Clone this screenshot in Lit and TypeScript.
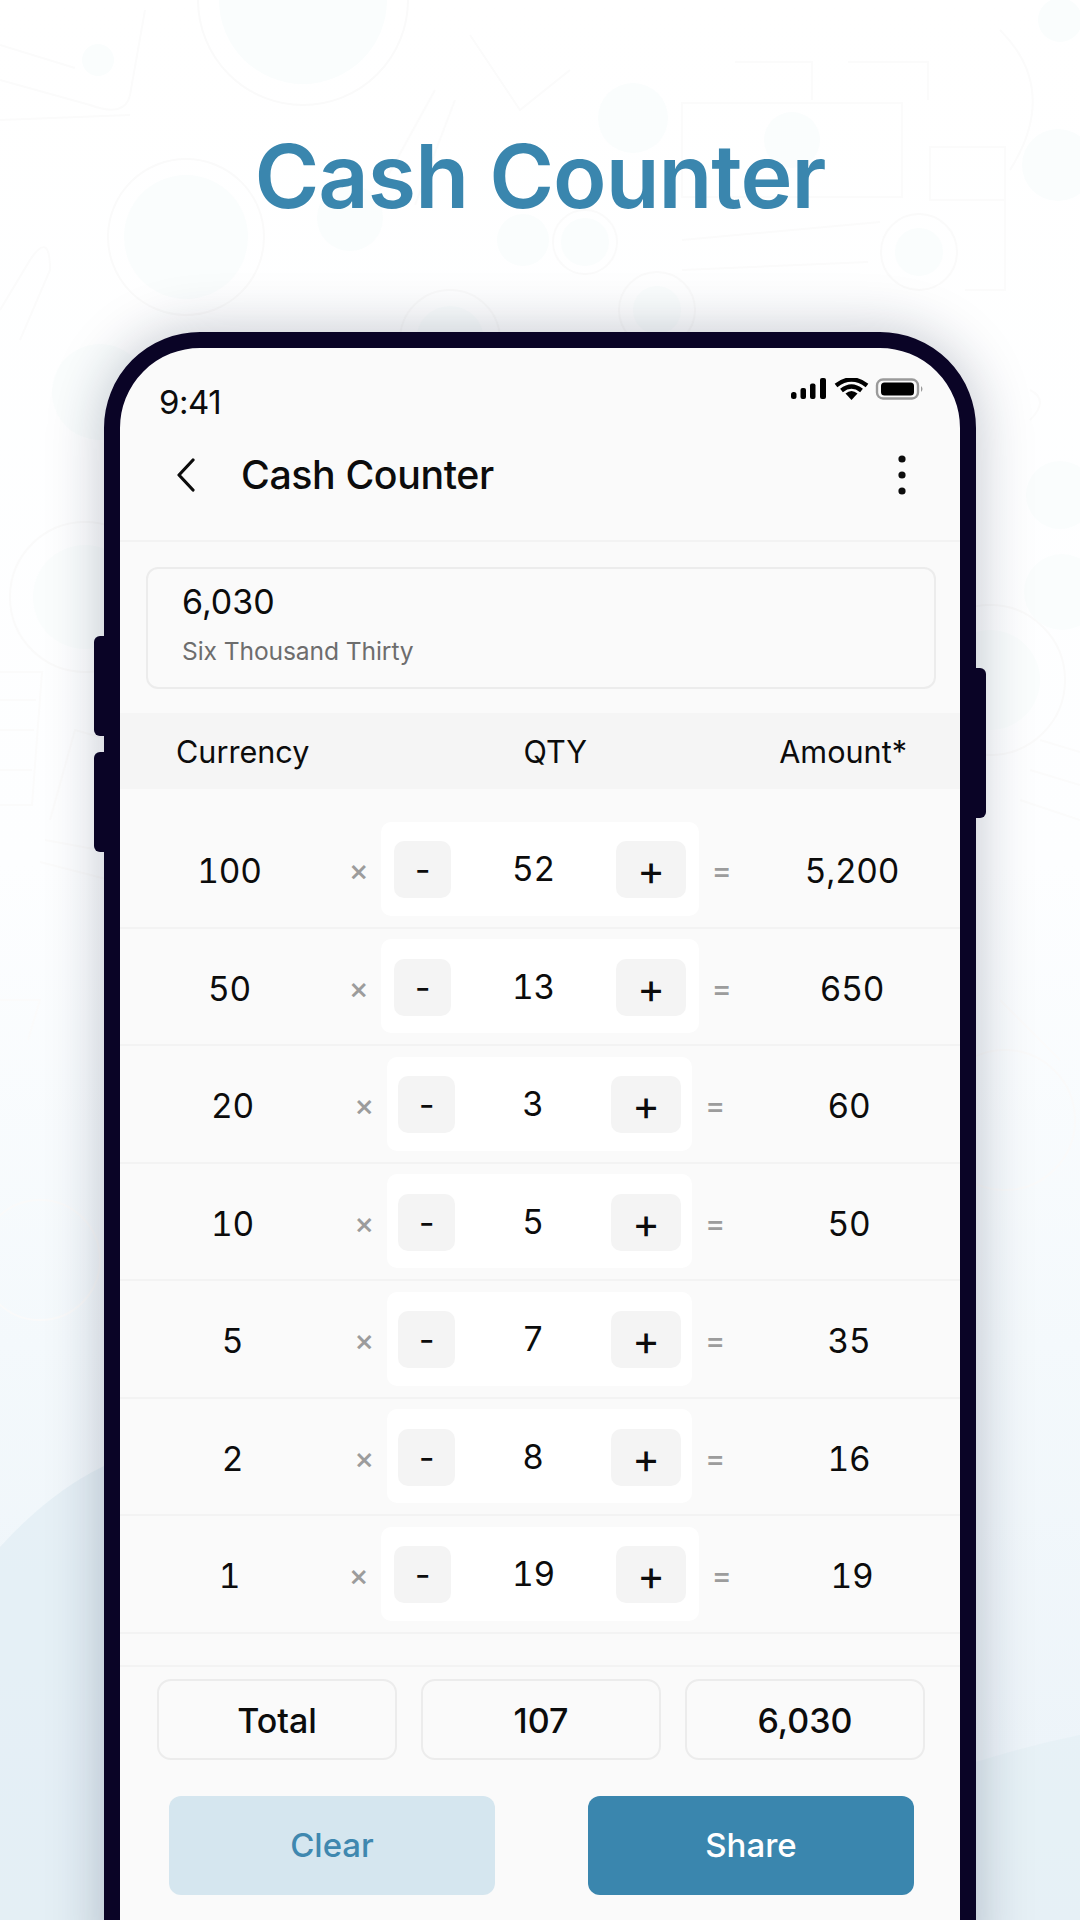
import { LitElement, html, css, svg } from "lit";
import { customElement } from "lit/decorators.js";

const ROWS = [
  { cur: "100", qty: "52", amt: "5,200", wide: true },
  { cur: "50", qty: "13", amt: "650", wide: true },
  { cur: "20", qty: "3", amt: "60", wide: false },
  { cur: "10", qty: "5", amt: "50", wide: false },
  { cur: "5", qty: "7", amt: "35", wide: false },
  { cur: "2", qty: "8", amt: "16", wide: false },
  { cur: "1", qty: "19", amt: "19", wide: true },
];

const COINS: [number, number, number, number][] = [
  [303, 0, 105, 84], [186, 237, 78, 62], [585, 242, 32, 24], [919, 252, 38, 24], [657, 310, 38, 24],
  [85, 597, 75, 52], [990, 680, 75, 50], [450, 340, 50, 34], [1005, 1120, 70, 0], [40, 1260, 60, 0],
];
const BLOBS: [number, number, number][] = [
  [633, 118, 35], [792, 140, 28], [350, 218, 33], [523, 240, 26], [1058, 165, 36], [100, 392, 48],
  [1060, 495, 34], [1062, 592, 38], [1060, 20, 22], [98, 60, 16],
];
const LINES: string[] = [
  "M0 45 L75 68", "M0 80 L90 105 Q125 118 130 95 L145 10", "M0 120 L130 115",
  "M682 240 L880 222", "M682 270 L868 262", "M930 147 H1005 V200 H930 Z", "M930 200 H1005 V290 H965",
  "M735 62 H812 V100", "M848 62 H928 V100", "M682 103 H902 V197 H682 Z",
  "M470 35 L520 110 L570 70", "M380 190 L435 90", "M415 205 L455 100",
  "M0 672 H42 L32 805 H0", "M0 700 H36", "M0 730 H34", "M0 770 H32",
  "M50 820 L75 730 L110 740", "M45 840 L110 852", "M40 862 L110 880",
  "M1040 740 L1080 752", "M1030 770 L1080 785", "M1020 800 L1080 820",
  "M0 310 L30 260 Q50 230 50 270 L20 340", "M0 1000 L40 1000 L28 1040", "M1000 1000 L1060 1060",
  "M1030 390 Q1050 400 1030 420", "M1000 30 Q1060 90 1010 170",
];

@customElement("app-root")
export class AppRoot extends LitElement {
  static styles = css`
    :host {
      display: block;
      width: 1080px;
      height: 1920px;
      overflow: hidden;
      position: relative;
      font-family: "Inter", "Liberation Sans", sans-serif;
      color: #0c0c0c;
      background: linear-gradient(180deg, #ffffff 0%, #fdfeff 45%, #f4f9fc 70%, #eaf2f8 100%);
    }
    .decor { position: absolute; inset: 0; width: 1080px; height: 1920px; }
    .title {
      position: relative;
      margin: 0;
      height: 332px;
      padding-top: 128px;
      box-sizing: border-box;
      text-align: center;
      font-size: 88px;
      line-height: 96px;
      font-weight: 600;
      letter-spacing: -1px;
      color: #3a86ae;
    }
    .phone {
      position: relative;
      margin-left: 104px;
      width: 872px;
      height: 1640px;
      box-sizing: border-box;
      border: 16px solid #0a0426;
      border-radius: 96px 96px 0 0;
      background: #fafafa;
      box-shadow: 0 0 56px rgba(20, 30, 60, 0.26);
    }
    .side {
      position: absolute;
      width: 12px;
      background: #0a0426;
      border-radius: 6px 0 0 6px;
    }
    .s1 { left: -26px; top: 288px; height: 100px; }
    .s2 { left: -26px; top: 404px; height: 100px; }
    .s3 { right: -26px; top: 320px; height: 150px; border-radius: 0 6px 6px 0; }
    .screen {
      border-radius: 80px 80px 0 0;
      overflow: hidden;
      display: flex;
      flex-direction: column;
      height: 100%;
    }
    .status {
      height: 84px;
      padding: 30px 35px 0 39px;
      box-sizing: border-box;
      display: flex;
      justify-content: space-between;
      align-items: flex-start;
    }
    .time { font-size: 33px; line-height: 48px; font-weight: 400; letter-spacing: -0.5px; }
    .sicons { display: block; }
    .appbar {
      height: 110px;
      padding: 0 53px 22px 56px;
      box-sizing: border-box;
      display: flex;
      align-items: center;
      border-bottom: 2px solid #f3f3f3;
    }
    .apptitle { font-size: 39.3px; font-weight: 500; margin-left: 45px; flex: 1; letter-spacing: -0.4px; line-height: 44px; }
    .card {
      margin: 25px 24px 0 26px;
      height: 122px;
      box-sizing: border-box;
      padding: 13px 34px;
      border: 2px solid #ececec;
      border-radius: 12px;
    }
    .big { font-size: 34px; line-height: 40px; }
    .small { font-size: 24.6px; line-height: 32px; margin-top: 13px; color: #6d6d6d; letter-spacing: -0.1px; }
    .thead {
      margin-top: 24px;
      height: 76px;
      background: #f5f5f5;
      font-size: 30.6px;
      display: grid;
      grid-template-columns: 347.5px 172px 1fr;
      align-items: center;
      box-sizing: border-box;
      padding-left: 56px;
      padding-right: 53px;
    }
    .thead .r { text-align: right; }
    .rows { padding-top: 22px; }
    .row {
      height: 117.5px;
      box-sizing: border-box;
      border-bottom: 2px solid #f3f3f3;
      display: grid;
      align-items: center;
      font-size: 33.5px;
      font-variant-numeric: tabular-nums;
      letter-spacing: -0.3px;
      text-align: center;
    }
    .row.wide { grid-template-columns: 216px 45px 318px 45px 216px; }
    .row.narrow { grid-template-columns: 221px 46px 305px 46px 222px; }
    .cur, .amt { margin-top: 5px; }
    .op { margin-top: 3px; }
    .row.wide .cur { padding-left: 3px; }
    .row.narrow .cur { padding-left: 4px; }
    .op { color: #9c9c9c; font-size: 30px; font-weight: 500; }
    .stepper {
      height: 94px;
      background: #fff;
      border-radius: 10px;
      display: flex;
      align-items: center;
      padding: 2px 13px 0;
      box-sizing: border-box;
    }
    .narrow .stepper { padding: 2px 11px 0; }
    .btn {
      height: 57px;
      background: #f4f4f4;
      border-radius: 10px;
      display: flex;
      align-items: center;
      justify-content: center;
      font-size: 34px;
      font-weight: 400;
    }
    .minus { width: 57px; }
    .plus { width: 70px; font-size: 42px; }
    .qty { flex: 1; margin-top: -1px; }
    .spacer { height: 31px; border-bottom: 2px solid #f3f3f3; }
    .totals {
      margin-top: 12px;
      padding: 0 35px 0 37px;
      display: grid;
      grid-template-columns: repeat(3, 1fr);
      gap: 24px;
    }
    .tot {
      height: 81px;
      padding-top: 2px;
      box-sizing: border-box;
      border: 2px solid #ececec;
      border-radius: 14px;
      display: flex;
      align-items: center;
      justify-content: center;
      font-size: 34px;
      font-weight: 450;
    }
    .actions {
      margin-top: 36px;
      padding: 0 46px 0 49px;
      display: flex;
      justify-content: space-between;
    }
    .action {
      width: 326px;
      height: 99px;
      border-radius: 12px;
      display: flex;
      align-items: center;
      justify-content: center;
      font-size: 33px;
      font-weight: 500;
    }
    .clear { background: #d5e6ef; color: #3f88af; }
    .share { background: #3a86ae; color: #fff; }
  `;

  private decor() {
    return html`<svg class="decor" viewBox="0 0 1080 1920" fill="none">
      <path d="M0 1547 Q50 1492 104 1466 L300 1400 L976 1400 L976 1920 L0 1920 Z" fill="#e2eef4" opacity="0.75"/>
      <path d="M976 1762 Q1030 1745 1080 1735 L1080 1920 L976 1920 Z" fill="#e2eef4" opacity="0.55"/>
      ${COINS.map(([x, y, r, ri]) => svg`
        <circle cx=${x} cy=${y} r=${r} stroke="#fafafa" stroke-width="2"/>
        ${ri ? svg`<circle cx=${x} cy=${y} r=${ri} fill="#fafdfd"/>` : ""}`)}
      ${BLOBS.map(([x, y, r]) => svg`<circle cx=${x} cy=${y} r=${r} fill="#fafdfd"/>`)}
      ${LINES.map((d) => svg`<path d=${d} stroke="#fbfbfb" stroke-width="2"/>`)}
    </svg>`;
  }

  private statusIcons() {
    return html`<svg class="sicons" width="134" height="24" viewBox="0 0 134 24">
      <rect x="0" y="14" width="5.5" height="7" rx="2.5" fill="#000"/>
      <rect x="9.5" y="10" width="5.5" height="11" rx="2" fill="#000"/>
      <rect x="19" y="5.5" width="5.5" height="15.5" rx="2" fill="#000"/>
      <rect x="29" y="0" width="6" height="21" rx="2" fill="#000"/>
      <path d="M45 7.5 Q60.5 -4.5 76 7.5" stroke="#000" stroke-width="4.4" fill="none"/>
      <path d="M50.5 12.5 Q60.5 4.5 70.5 12.5" stroke="#000" stroke-width="4.4" fill="none"/>
      <path d="M54.5 15.5 Q60.5 10.5 66.5 15.5 L60.5 22 Z" fill="#000"/>
      <rect x="86" y="1.5" width="41" height="19" rx="6" fill="none" stroke="#9a9a9a" stroke-width="2.4"/>
      <rect x="90" y="4.5" width="33" height="13" rx="3.5" fill="#000"/>
      <path d="M130 8 Q133 11 130 14 Z" fill="#9a9a9a"/>
    </svg>`;
  }

  render() {
    return html`
      ${this.decor()}
      <h1 class="title">Cash Counter</h1>
      <div class="phone">
        <div class="side s1"></div>
        <div class="side s2"></div>
        <div class="side s3"></div>
        <div class="screen">
          <div class="status">
            <span class="time">9:41</span>
            ${this.statusIcons()}
          </div>
          <div class="appbar">
            <svg width="20" height="34" viewBox="0 0 20 34" fill="none">
              <path d="M17 2 L3 17 L17 32" stroke="#0c0c0c" stroke-width="3.2" stroke-linecap="round" stroke-linejoin="round"/>
            </svg>
            <span class="apptitle">Cash Counter</span>
            <svg width="10" height="42" viewBox="0 0 10 42">
              <circle cx="5" cy="5" r="3.6" fill="#0c0c0c"/>
              <circle cx="5" cy="21" r="3.6" fill="#0c0c0c"/>
              <circle cx="5" cy="37" r="3.6" fill="#0c0c0c"/>
            </svg>
          </div>
          <div class="card">
            <div class="big">6,030</div>
            <div class="small">Six Thousand Thirty</div>
          </div>
          <div class="thead">
            <span>Currency</span>
            <span>QTY</span>
            <span class="r">Amount*</span>
          </div>
          <div class="rows">
            ${ROWS.map(
              (r) => html`<div class="row ${r.wide ? "wide" : "narrow"}">
                <span class="cur">${r.cur}</span>
                <span class="op">×</span>
                <div class="stepper">
                  <span class="btn minus">-</span>
                  <span class="qty">${r.qty}</span>
                  <span class="btn plus">+</span>
                </div>
                <span class="op">=</span>
                <span class="amt">${r.amt}</span>
              </div>`
            )}
          </div>
          <div class="spacer"></div>
          <div class="totals">
            <div class="tot">Total</div>
            <div class="tot">107</div>
            <div class="tot">6,030</div>
          </div>
          <div class="actions">
            <div class="action clear">Clear</div>
            <div class="action share">Share</div>
          </div>
        </div>
      </div>
    `;
  }
}
